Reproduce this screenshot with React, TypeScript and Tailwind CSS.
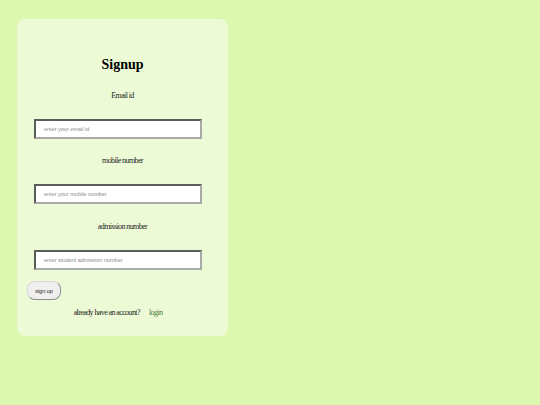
import { useState } from "react";

function Field({ label, placeholder }: { label: string; placeholder: string }) {
  return (
    <>
      <p className="mt-[18px] text-center text-[8px] leading-[9px] tracking-[-0.6px] text-[#1f1f1f]">{label}</p>
      <input
        placeholder={placeholder}
        className="ml-[17px] mt-[19px] h-[20px] w-[168px] border-2 border-t-[#5c5c5c] border-l-[#5c5c5c] border-r-[#a9a9a9] border-b-[#a9a9a9] bg-white pl-[8px] font-['Liberation_Sans',sans-serif] text-[5.5px] outline-none placeholder:text-[#8a8a8a]"
      />
    </>
  );
}

export default function App() {
  const [sent, setSent] = useState(false);

  return (
    <div className="min-h-[405px] w-full bg-[#dcf8ae] pl-[17px] pt-[19px] font-['Liberation_Serif',serif]">
      <div className="flex h-[317px] w-[211px] flex-col rounded-[8px] bg-[#ecfad6] pt-[38px]">
        <h1 className="text-center text-[14px] font-bold leading-[16px] text-black">Signup</h1>
        <Field label="Email id" placeholder="enter your email id" />
        <div className="-mt-[1px] flex flex-col">
          <Field label="mobile number" placeholder="enter your mobile number" />
        </div>
        <Field label="admission number" placeholder="enter student admission number" />
        <div className="mt-[11px] flex pl-[10px]">
          <button
            onClick={() => setSent(!sent)}
            className="h-[19px] w-[34px] rounded-[8px] border border-t-[#d8d8d8] border-l-[#d8d8d8] border-r-[#8f8f8f] border-b-[#8f8f8f] bg-[#efefef] pt-[2px] font-['Liberation_Sans',sans-serif] text-[5.5px] leading-none text-[#222]"
          >
            sign up
          </button>
        </div>
        <p className="mt-[8px] pr-[9px] text-center text-[8px] leading-[9px] tracking-[-0.6px] text-[#1f1f1f]">
          already have an account?
          <a href="#" className="ml-[9px] text-[#4c7a3c]">
            login
          </a>
        </p>
      </div>
    </div>
  );
}
